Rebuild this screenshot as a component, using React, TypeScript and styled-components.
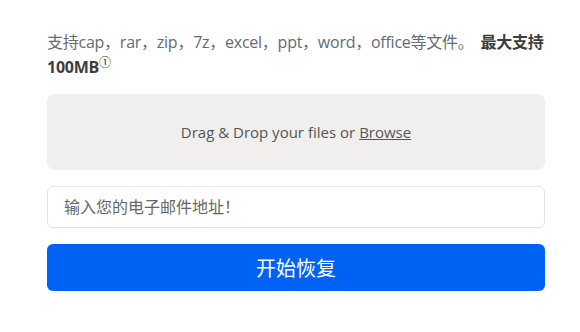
import styled, { createGlobalStyle } from 'styled-components';

const GlobalStyle = createGlobalStyle`
  html, body {
    margin: 0;
    padding: 0;
    background: #ffffff;
  }
  body {
    font-family: 'Open Sans', 'Noto Sans CJK SC', sans-serif;
  }
`;

const App = () => {
  return (
    <>
      <GlobalStyle />
      <Upload.Page>
        <Upload.Note>
          支持cap，rar，zip，7z，excel，ppt，word，office等文件。{' '}
          <Upload.Strong>
            最大支持100MB<Upload.Sup>①</Upload.Sup>
          </Upload.Strong>
        </Upload.Note>
        <Upload.Drop>
          Drag &amp; Drop your files or <Upload.Browse>Browse</Upload.Browse>
        </Upload.Drop>
        <Upload.Input type='email' placeholder='输入您的电子邮件地址！' />
        <Upload.Button type='button'>开始恢复</Upload.Button>
      </Upload.Page>
    </>
  );
};

const Upload = {
  Page: styled.div`
    width: 498px;
    padding: 30px 0 0 47px;
    display: flex;
    flex-direction: column;
  `,
  Note: styled.p`
    margin: 0;
    font-size: 16px;
    line-height: 25px;
    letter-spacing: -0.25px;
    color: #666a73;
  `,
  Strong: styled.strong`
    margin-left: 3px;
    font-weight: 700;
    color: #3d3d3d;
  `,
  Sup: styled.sup`
    font-size: 12px;
    font-weight: 400;
    line-height: 0;
    vertical-align: 6px;
    color: #333;
  `,
  Drop: styled.div`
    margin-top: 14px;
    height: 76px;
    border-radius: 8px;
    background: #f0efed;
    display: flex;
    align-items: center;
    justify-content: center;
    font-size: 15px;
    color: #555555;
  `,
  Browse: styled.span`
    margin-left: 4px;
    text-decoration: underline;
    cursor: pointer;
  `,
  Input: styled.input`
    margin-top: 16px;
    box-sizing: border-box;
    height: 42px;
    width: 100%;
    padding: 0 16px;
    border: 1px solid #e3e4ea;
    border-radius: 6px;
    font-family: 'Open Sans', 'Noto Sans CJK SC', sans-serif;
    font-size: 16px;
    outline: none;
    &::placeholder {
      color: #666666;
    }
  `,
  Button: styled.button`
    margin-top: 16px;
    height: 47px;
    width: 100%;
    border: none;
    border-radius: 6px;
    background: #0062f5;
    color: #ffffff;
    font-family: 'Open Sans', 'Noto Sans CJK SC', sans-serif;
    font-size: 20px;
    cursor: pointer;
  `,
};

export default App;
